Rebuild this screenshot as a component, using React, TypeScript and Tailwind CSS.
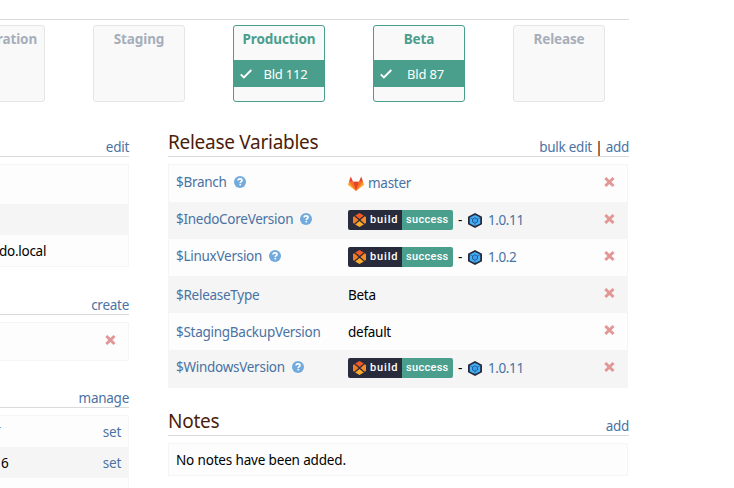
import type { ReactNode } from "react";

const LINK = "text-[#4a72a3]";

function Cross() {
  return (
    <svg width="11" height="10" viewBox="0 0 11 10" className="block shrink-0">
      <path d="M1.3 1 9.5 9M9.5 1 1.3 9" stroke="#e29797" strokeWidth="2.9" />
    </svg>
  );
}

function Help() {
  return (
    <svg width="12" height="12" viewBox="0 0 12 12" className="block shrink-0">
      <circle cx="6" cy="6" r="6" fill="#71abde" />
      <path d="M4 4.5C4.1 3.3 5 2.8 6 2.8c1.2 0 2 .7 2 1.6 0 1.2-1.7 1.2-1.7 2.5" fill="none" stroke="#fff" strokeWidth="1.7" />
      <rect x="5.4" y="7.8" width="1.7" height="1.6" fill="#fff" />
    </svg>
  );
}

function Gitlab() {
  return (
    <svg width="16" height="15" viewBox="0 0 16 15" className="block shrink-0">
      <path d="M8 15 0 8.8 1 5.7H15l1 3.1Z" fill="#fca326" />
      <path d="M8 15 1 5.7H5.1ZM8 15 15 5.7H10.9Z" fill="#fc6d26" />
      <path d="M8 15 5.1 5.7h5.8ZM1 5.7 2.7.4 5.1 5.7ZM15 5.7 13.3.4 10.9 5.7Z" fill="#e24329" />
    </svg>
  );
}

function BuildLogo() {
  return (
    <svg width="13" height="14" viewBox="0 0 13 14" className="block shrink-0">
      <path d="M6.5 0 10.8 2.5 6.5 6 2.2 2.5Z" fill="#f15a24" />
      <path d="M1.3 3.2 5.6 7 1.3 10.8 0 10V4Z" fill="#f47b25" />
      <path d="M11.7 3.2 7.4 7l4.3 3.8L13 10V4Z" fill="#f68b28" />
      <path d="M6.5 8 10.8 11.5 6.5 14 2.2 11.5Z" fill="#fbaa29" />
    </svg>
  );
}

function PackageLogo() {
  return (
    <svg width="14" height="15" viewBox="0 0 14 15" className="block shrink-0">
      <path d="M7 0 14 3.7v7.6L7 15 0 11.3V3.7Z" fill="#272b3c" />
      <path d="M7 1.9 12.2 4.6v5.8L7 13.1 1.8 10.4V4.6Z" fill="#45aff8" />
      <path d="M7 4.7 9.5 6v3L7 10.3 4.5 9V6Z" fill="#3a9eee" stroke="#245a8a" strokeWidth=".9" />
      <path d="M2 4.7 4.5 6M12 4.7 9.5 6M7 10.3V13" stroke="#24507a" strokeWidth=".6" />
    </svg>
  );
}

function Check() {
  return (
    <svg width="12" height="10" viewBox="0 0 12 10" className="block shrink-0">
      <path d="M.8 5.4 3.9 8.5 11.3 1" fill="none" stroke="#fff" strokeWidth="1.9" />
    </svg>
  );
}

function Stage({ name, build }: { name: string; build?: string }) {
  return (
    <div className={`flex h-[77px] w-[92px] shrink-0 flex-col rounded-[3px] border bg-[#f9f9f9] text-center ${build ? "border-[#4a9e8c] text-[#4a9e8c]" : "border-[#e6e6e6] text-[#a6aebb]"}`}>
      <div className="mt-[3px] h-[31px] font-bold leading-5 tracking-[-0.12px]">{name}</div>
      {build && (
        <div className="flex h-[27px] items-center bg-[#4a9e8c] pl-1.5 pr-[5px] pt-px text-white">
          <Check />
          <span className="flex-1 text-[13px] tracking-[-0.2px]">{build}</span>
        </div>
      )}
    </div>
  );
}

function Build({ version }: { version: string }) {
  return (
    <>
      <span className="flex h-5 w-[105px] shrink-0 overflow-hidden rounded-[2px] font-['Roboto',sans-serif] text-[11px] font-medium leading-5 text-white">
        <span className="flex w-[54px] items-center bg-[#272b3c] pl-[5px]">
          <BuildLogo />
          <span className="ml-1 tracking-[0.85px]">build</span>
        </span>
        <span className="w-[51px] bg-[#4a9e8c] pl-1 tracking-[0.3px]">success</span>
      </span>
      <span className="ml-[5px] w-[10px]">-</span>
      <PackageLogo />
      <a className={`ml-[6px] tracking-[-0.4px] ${LINK}`}>{version}</a>
    </>
  );
}

function Heading({ title, action, className }: { title?: string; action: ReactNode; className: string }) {
  return (
    <div className={`flex items-end justify-between border-b border-[#dadada] ${className}`}>
      <h2 className="text-[19px] leading-[27px] tracking-[-0.28px] text-[#4b1d0b]">{title}</h2>
      <div className={`-mb-px leading-5 ${LINK}`}>{action}</div>
    </div>
  );
}

const variables = [
  { name: "$Branch", help: true, height: "h-[37px]", pad: "pt-[7px]", value: <><Gitlab /><a className={`ml-1 ${LINK}`}>master</a></>, vp: "pt-[8px]", xp: "pt-[12px]" },
  { name: "$InedoCoreVersion", help: true, height: "h-[37px]", pad: "pt-[7px]", value: <Build version="1.0.11" />, vp: "pt-[8px]", xp: "pt-[12px]" },
  { name: "$LinuxVersion", help: true, height: "h-[37px]", pad: "pt-[7px]", value: <Build version="1.0.2" />, vp: "pt-[8px]", xp: "pt-[12px]" },
  { name: "$ReleaseType", height: "h-[37px]", pad: "pt-[9px]", value: "Beta", vp: "pt-[9px]", xp: "pt-[12px]" },
  { name: "$StagingBackupVersion", height: "h-[37px]", pad: "pt-[9px]", value: "default", vp: "pt-[9px]", xp: "pt-[12px]" },
  { name: "$WindowsVersion", help: true, height: "h-[38px]", pad: "pt-[7px]", value: <Build version="1.0.11" />, vp: "pt-[8px]", xp: "pt-[12px]" },
];

export default function App() {
  return (
    <div className="h-[488px] w-[734px] overflow-hidden bg-white font-['Noto_Sans',sans-serif] text-[13.5px] leading-5 tracking-[-0.27px] text-black">
      <div className="h-5 w-[629px] border-b border-[#dadada]" />
      <div className="-ml-[47px] mt-[5px] flex gap-12">
        <Stage name="Integration" />
        <Stage name="Staging" />
        <Stage name="Production" build="Bld 112" />
        <Stage name="Beta" build="Bld 87" />
        <Stage name="Release" />
      </div>
      <div className="flex gap-[39px]">
        <div className="w-[129px]">
          <Heading action="edit" className="h-[55px]" />
          <div className="mt-[7px] border border-l-0 border-[#f5f5f5] bg-[#fdfdfd]">
            <div className="h-[39px]" />
            <div className="h-[31px] bg-[#f5f5f5]" />
            <div className="-ml-px h-[31px] pt-1.5">do.local</div>
          </div>
          <Heading action="create" className="h-12" />
          <div className="mt-[7px] flex h-[39px] justify-end border border-l-0 border-[#f5f5f5] bg-[#fdfdfd] pr-3 pt-3">
            <Cross />
          </div>
          <Heading action="manage" className="h-[47px]" />
          <div className="mt-[7px] h-[80px] overflow-hidden border border-l-0 border-[#f5f5f5] bg-[#fdfdfd]">
            <div className="flex h-[31px] justify-between pr-[7px] pt-1.5">
              <span className="mt-[5px] h-px w-px bg-[#71abde]" />
              <a className={LINK}>set</a>
            </div>
            <div className="flex h-[31px] justify-between bg-[#f5f5f5] pl-px pr-[7px] pt-1.5">
              <span>6</span>
              <a className={LINK}>set</a>
            </div>
          </div>
        </div>
        <div className="w-[461px]">
          <Heading title="Release Variables" action={<><a>bulk edit</a><span className="text-black"> | </span><a>add</a></>} className="h-[55px]" />
          <div className="mr-px mt-[7px] border-x border-t border-[#f5f5f5] bg-[#fdfdfd]">
            {variables.map((v, i) => (
              <div key={v.name} className={`flex ${v.height} ${i % 2 ? "bg-[#f5f5f5]" : ""} pl-[7px] pr-3`}>
                <div className={`flex h-fit w-[172px] items-center gap-[7px] ${v.pad} ${LINK}`}>
                  <span>{v.name}</span>
                  {v.help && <Help />}
                </div>
                <div className={`flex h-fit flex-1 items-center ${v.vp}`}>{v.value}</div>
                <div className={v.xp}><Cross /></div>
              </div>
            ))}
          </div>
          <Heading title="Notes" action="add" className="h-12" />
          <div className="mr-px mt-[7px] h-[33px] border border-[#f5f5f5] bg-[#fdfdfd] pl-[7px] pt-1.5 tracking-[-0.16px]">No notes have been added.</div>
        </div>
      </div>
    </div>
  );
}
